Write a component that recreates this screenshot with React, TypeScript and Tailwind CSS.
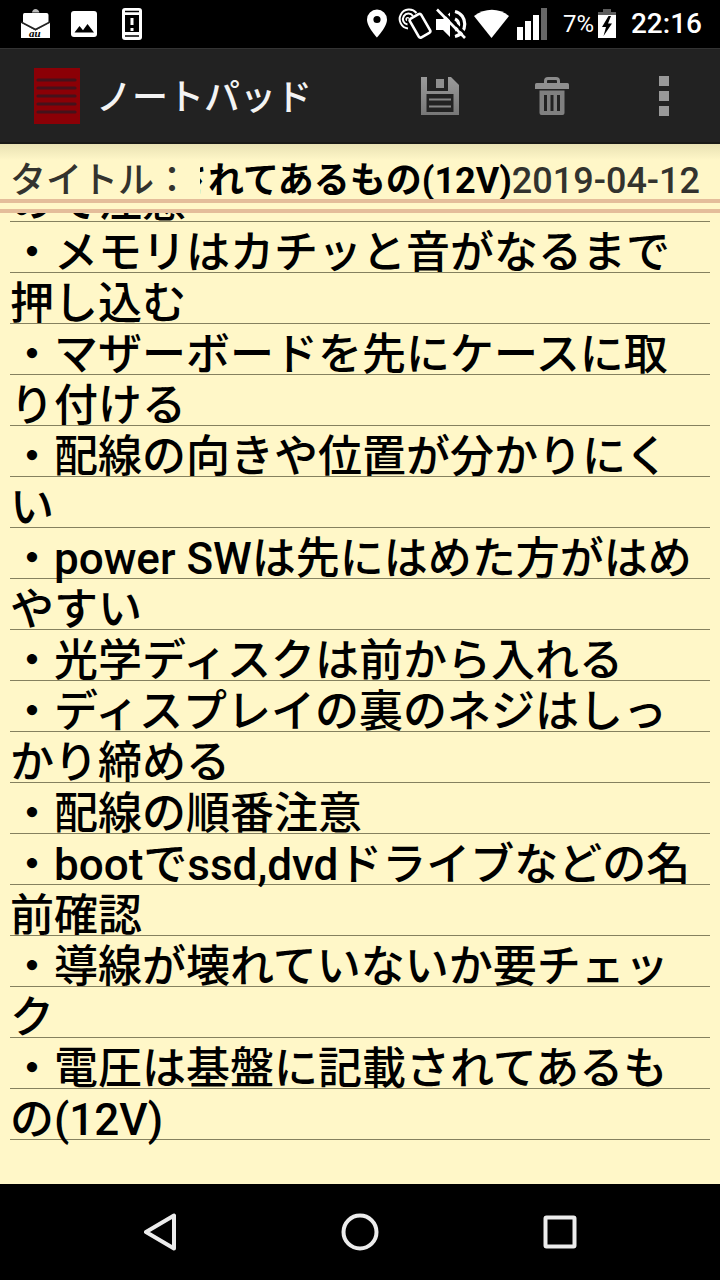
import { useLayoutEffect, useRef, useState } from "react";

const NOTE = [
  "ので注意",
  "・メモリはカチッと音がなるまで",
  "押し込む",
  "・マザーボードを先にケースに取",
  "り付ける",
  "・配線の向きや位置が分かりにく",
  "い",
  "・power SWは先にはめた方がはめ",
  "やすい",
  "・光学ディスクは前から入れる",
  "・ディスプレイの裏のネジはしっ",
  "かり締める",
  "・配線の順番注意",
  "・bootでssd,dvdドライブなどの名",
  "前確認",
  "・導線が壊れていないか要チェッ",
  "ク",
  "・電圧は基盤に記載されてあるも",
  "の(12V)",
].join("\n");

function StatusBar() {
  return (
    <div className="flex h-12 shrink-0 items-center justify-between bg-black pr-[18px] pl-5 text-white">
      <div className="flex items-center gap-5">
        <svg width="31" height="32" viewBox="0 0 31 32" fill="#fff">
          <path d="M12 4.500c.4-2 1.600-3.500 3.500-3.500s3.400 1.500 3.900 3.500z" fill="#bbb" />
          <path d="M4.500 5h22q2 0 2 2v8.500L15.500 22 3 15.500V7q0-2 1.500-2z" />
          <path d="M1 14.500 15.500 22.500 30 14.500V30H1z" />
          <path d="M1 14 15.500 21.500 30 14" fill="none" stroke="#222" strokeWidth="1.600" />
          <text x="9" y="28.500" fontSize="11" fontWeight="bold" fontStyle="italic" fill="#000" className="font-['Liberation_Serif',serif]">au</text>
        </svg>
        <svg width="26" height="32" viewBox="0 0 26 32">
          <rect y="3" width="26" height="26" rx="3" fill="#fff" />
          <path d="m3.500 24.500 5-6.500 3.500 4.200L16.500 16l6.500 8.500z" fill="#000" />
        </svg>
        <svg width="30" height="32" viewBox="-5 0 30 32">
          <rect width="20" height="32" rx="3" fill="#fff" />
          <path d="M3 3.500h14M3 28h14" stroke="#000" strokeWidth="1.700" />
          <path d="M3 7h14v17H3z" fill="#000" />
          <path d="M8.500 10h3v7h-3zM8.500 20h3v3h-3z" fill="#fff" />
        </svg>
      </div>
      <div className="flex items-center">
        <svg width="31" height="32" viewBox="-1 0 31 32">
          <path d="M9 1.500A10 10 0 0 0-1 11.500c0 7.500 10 18 10 18s10-10.500 10-18a10 10 0 0 0-10-10zm0 6.400a3.600 3.600 0 1 1 0 7.200 3.600 3.600 0 0 1 0-7.200z" fill="#fff" />
        </svg>
        <svg width="38" height="32" viewBox="0 0 38 32" fill="none" stroke="#fff" strokeWidth="2">
          <path d="M10 20.500A9.500 9.500 0 1 1 18.500 5" />
          <path d="M9.500 16.500A5.500 5.500 0 1 1 15 8" />
          <path d="M9 12.500a1.500 1.500 0 1 1 2-2" strokeWidth="1.500" />
          <rect x="15.500" y="7" width="13" height="21.500" rx="2" strokeWidth="2.600" transform="rotate(-30 22 17.700)" />
        </svg>
        <svg width="38" height="32" viewBox="0 0 38 32">
          <path d="M0 11h7l7-6.500v24.500l-7-7H0z" fill="#fff" />
          <path d="M19 11a6 6 0 0 1 0 11M19 3.500c13 3 13 22 0 25" fill="none" stroke="#fff" strokeWidth="3.200" />
          <path d="m3-.500 28 28" stroke="#000" strokeWidth="2.500" />
          <path d="m1 1.500 28 28.500" stroke="#fff" strokeWidth="2.600" />
        </svg>
        <svg width="42" height="32" viewBox="0 0 42 32">
          <path d="M0 8C11-.500 25-.500 35 8L17.500 30z" fill="#fff" />
        </svg>
        <svg width="47" height="32" viewBox="0 0 47 32" fill="#fff">
          <path d="M1 19h6v13H1zM9 13h6v19H9zM17 7h6v25h-6z" />
          <path d="M25 0h6v32h-6z" fill="#666" />
        </svg>
        <span className="w-[34px] font-['Roboto',sans-serif] text-[24px] leading-8">7%</span>
        <svg width="34" height="32" viewBox="0 0 34 32">
          <path d="M1 4h5V1h8v3h5v5H1z" fill="#5c5c5c" />
          <path d="M1 7h18v23H1z" fill="#fff" />
          <path d="M11.500 8 5 19h4l-2.500 9L15 15.500h-4L14 8z" fill="#000" />
        </svg>
        <span className="font-['Roboto',sans-serif] text-[28px] leading-8 font-medium">22:16</span>
      </div>
    </div>
  );
}

function ActionBar() {
  return (
    <header className="flex h-24 shrink-0 items-stretch border-t border-b-2 border-t-[#333] border-b-[#191917] bg-[#222]">
      <div className="flex flex-1 items-center gap-4 pl-[34px]">
        <svg width="46" height="56" viewBox="0 0 46 56">
          <rect width="46" height="56" fill="#8b0006" />
          <path d="M4 12h37M4 20h37M4 28h37M4 36h37M4 44h37" stroke="#45121b" strokeWidth="3.200" strokeLinecap="round" />
        </svg>
        <h1 className="pt-1 text-[36px] leading-[48px] font-medium text-[#f3f3f3]">ノートパッド</h1>
      </div>
      <button type="button" aria-label="保存" className="flex w-28 items-center justify-center">
        <svg width="38" height="39" viewBox="0 0 38 39">
          <defs>
            <linearGradient id="metal" x1="0" y1="0" x2="0" y2="1">
              <stop offset="0" stopColor="#9a9a9a" />
              <stop offset="1" stopColor="#777" />
            </linearGradient>
          </defs>
          <path fillRule="evenodd" fill="url(#metal)" d="M0 1h6v14h21V1h3l8 8v30H0zM5.500 18v18h27V18z" />
          <path fill="#8f8f8f" d="M15 3h8v9h-8z" />
          <path d="M8 23.500h22M8 30.500h22" stroke="#858585" strokeWidth="2" />
        </svg>
      </button>
      <button type="button" aria-label="削除" className="flex w-28 items-center justify-center">
        <svg width="34" height="38" viewBox="0 0 34 38">
          <path d="M10.500 7V4q0-2.500 2.500-2.500h8q2.500 0 2.500 2.500v3" fill="none" stroke="#8c8c8c" strokeWidth="3" />
          <path d="M1.500 6h31q1.500 0 1.500 1.500V12H0V7.500Q0 6 1.500 6z" fill="#8f8f8f" />
          <path fillRule="evenodd" fill="#808080" d="M4.500 13.500h25V36q0 2-2 2h-21q-2 0-2-2zM9 18v16h3V18zm6.500 0v16h3V18zm6.500 0v16h3V18z" />
        </svg>
      </button>
      <button type="button" aria-label="その他" className="flex w-28 items-center justify-center">
        <svg width="10" height="40" viewBox="0 0 10 40">
          <path d="M0 0h10v10H0zM0 15h10v10H0zM0 30h10v10H0z" fill="#999" />
        </svg>
      </button>
    </header>
  );
}

function TitleRow() {
  const [title, setTitle] = useState("されてあるもの(12V)");
  const field = useRef<HTMLInputElement>(null);

  // Keep the end of a long title in view.
  useLayoutEffect(() => {
    if (field.current) field.current.scrollLeft = field.current.scrollWidth;
  }, []);

  return (
    <div className="flex h-[55px] shrink-0 items-start bg-linear-to-b from-[#e9e2b4] to-[#fff7c8] to-30% pt-[17px] pr-5 pl-2.5 text-[36px] leading-10 text-[#33332e]">
      <label htmlFor="title" className="w-[190px] shrink-0 font-medium whitespace-nowrap">タイトル：</label>
      <input
        id="title"
        ref={field}
        value={title}
        onChange={(e) => setTitle(e.target.value)}
        className="h-10 min-w-0 flex-1 bg-transparent font-bold text-black outline-none"
      />
      <time dateTime="2019-04-12" className="shrink-0 font-medium">2019-04-12</time>
    </div>
  );
}

function NavBar() {
  return (
    <nav className="flex h-24 shrink-0 bg-black px-[60px]">
      <button type="button" aria-label="戻る" className="flex flex-1 items-center justify-center">
        <svg width="32" height="38" viewBox="0 0 32 38">
          <path d="M30 2.500v33L2 19z" fill="none" stroke="#ececec" strokeWidth="4" strokeLinejoin="round" />
        </svg>
      </button>
      <button type="button" aria-label="ホーム" className="flex flex-1 items-center justify-center">
        <svg width="38" height="38" viewBox="0 0 38 38">
          <circle cx="19" cy="19" r="16.500" fill="none" stroke="#ececec" strokeWidth="4" />
        </svg>
      </button>
      <button type="button" aria-label="最近使用したアプリ" className="flex flex-1 items-center justify-center">
        <svg width="34" height="34" viewBox="0 0 34 34">
          <rect x="2.500" y="2.500" width="29" height="29" rx="1" fill="none" stroke="#ececec" strokeWidth="4" />
        </svg>
      </button>
    </nav>
  );
}

export default function App() {
  const [note, setNote] = useState(NOTE);
  return (
    <div lang="ja" className="flex h-screen flex-col bg-[#fff7c8] font-['Roboto','Noto_Sans_CJK_JP',sans-serif]">
      <StatusBar />
      <ActionBar />
      <TitleRow />
      <div className="h-[14px] shrink-0 border-y-4 border-[#e4bd9a]" />
      <main className="flex min-h-0 flex-1 flex-col justify-end overflow-hidden px-2.5">
        <textarea
          aria-label="本文"
          rows={19}
          value={note}
          onChange={(e) => setNote(e.target.value)}
          className="block w-full shrink-0 resize-none overflow-hidden bg-[repeating-linear-gradient(to_bottom,transparent_0px,transparent_44px,#85815f_44px,#85815f_45px,transparent_45px,transparent_51px)] pb-[38px] text-[44px] leading-[51px] font-medium whitespace-pre text-black outline-none"
        />
      </main>
      <NavBar />
    </div>
  );
}
